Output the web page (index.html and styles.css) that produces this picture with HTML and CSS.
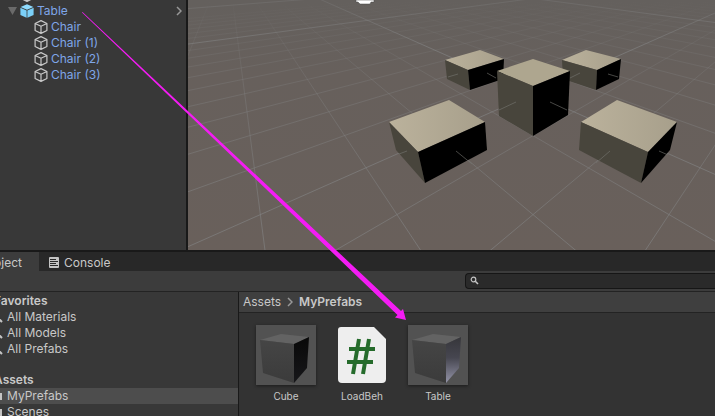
FILE: index.html
```html
<!DOCTYPE html>
<html lang="en">
<head>
<meta charset="utf-8">
<title>Editor</title>
<link rel="stylesheet" href="styles.css">
</head>
<body>
<svg class="defs" aria-hidden="true">
  <symbol id="cube" viewBox="0 0 14 14"><path d="M7 .6 12.900 3.500V10.500L7 13.400 1.100 10.500V3.500ZM1.100 3.500 7 6.300 12.900 3.500M7 6.300V13.400" fill="none" stroke="#c8c8c8" stroke-width="1.200" stroke-linejoin="round"/></symbol>
  <symbol id="prefab" viewBox="0 0 14 14"><path d="M7 .3 13.400 3 7 5.800 .6 3Z" fill="#8fdcff"/><path d="M.4 3.800 6.600 6.500V13.800L.4 11Z" fill="#7bd0f8"/><path d="M13.600 3.800 7.400 6.500V13.800L13.600 11Z" fill="#7bd0f8"/></symbol>
  <symbol id="lens" viewBox="0 0 12 12"><circle cx="4.500" cy="4.500" r="2.300" fill="none" stroke="#c4c4c4" stroke-width="1.200"/><path d="M6.300 6.300 9 9" stroke="#c4c4c4" stroke-width="1.600"/></symbol>
  <symbol id="handle" viewBox="0 0 12 12"><circle cx="4" cy="4" r="3.500" fill="none" stroke="#c4c4c4" stroke-width="1.400"/><path d="M6.500 6.500 11 11" stroke="#c4c4c4" stroke-width="2"/></symbol>
  <symbol id="folder" viewBox="0 0 12 12"><path d="M0 2H5L7 3H11V10H0Z" fill="#c4c4c4"/></symbol>
  <symbol id="chevron" viewBox="0 0 6 10"><path d="M1 1 5 5 1 9" fill="none" stroke="#989898" stroke-width="1.500"/></symbol>
</svg>
<main class="editor">
  <section class="upper">
    <nav class="hierarchy" aria-label="Hierarchy">
      <ul class="tree">
        <li class="row root"><svg class="icon"><use href="#cube"/></svg></li>
        <li class="row root"><svg class="fold" viewBox="0 0 9 8"><path d="M0 0H9L4.500 8Z" fill="#6a6a6a"/></svg><svg class="icon"><use href="#prefab"/></svg><a href="#">Table</a><svg class="open"><use href="#chevron"/></svg></li>
        <li class="row child"><svg class="icon"><use href="#cube"/></svg><a href="#">Chair</a></li>
        <li class="row child"><svg class="icon"><use href="#cube"/></svg><a href="#">Chair (1)</a></li>
        <li class="row child"><svg class="icon"><use href="#cube"/></svg><a href="#">Chair (2)</a></li>
        <li class="row child"><svg class="icon"><use href="#cube"/></svg><a href="#">Chair (3)</a></li>
      </ul>
    </nav>
    <svg class="scene" viewBox="188 0 527 250" preserveAspectRatio="xMinYMin slice" role="img" aria-label="Scene view">
      <defs>
        <linearGradient id="ground" gradientUnits="userSpaceOnUse" x1="0" y1="0" x2="0" y2="250"><stop offset="0" stop-color="#64605d"/><stop offset=".3" stop-color="#67605c"/><stop offset="1" stop-color="#69605b"/></linearGradient>
        <linearGradient id="fade" gradientUnits="userSpaceOnUse" x1="0" y1="0" x2="0" y2="250"><stop offset="0" stop-color="#808080" stop-opacity="0"/><stop offset=".12" stop-color="#808080" stop-opacity=".15"/><stop offset=".4" stop-color="#808080" stop-opacity=".4"/><stop offset="1" stop-color="#808080" stop-opacity=".7"/></linearGradient>
        <linearGradient id="major" gradientUnits="userSpaceOnUse" x1="0" y1="0" x2="0" y2="250"><stop offset="0" stop-color="#808080" stop-opacity=".3"/><stop offset=".2" stop-color="#808080" stop-opacity=".7"/><stop offset="1" stop-color="#808080" stop-opacity=".7"/></linearGradient>
        <linearGradient id="lid" x1="0" y1="0" x2="1" y2="0"><stop offset="0" stop-color="#bbb29c"/><stop offset="1" stop-color="#a79f8b"/></linearGradient>
      </defs>
      <rect x="188" width="2000" height="1200" fill="url(#ground)"/>
      <g fill="none" stroke="url(#fade)">
        <path d="M839-42 787 358M839-42 574 358M839-42 362 358M839-42 150 358M839-42-275 358M839-42-488 358M839-42-700 358M839-42-912 358M839-42-1125 358M839-42-1337 358M839-42-1550 358M839-42-1762 358M839-42-1974 358M839-42-2399 358M839-42-2612 358M839-42-2824 358M839-42-3036 358M839-42-3249 358M839-42-3461 358"/>
        <path d="M227-42 67 358M227-42 279 358M227-42 492 358M227-42 704 358M227-42 916 358M227-42 1341 358M227-42 1554 358M227-42 1766 358M227-42 1978 358M227-42 2191 358M227-42 2403 358M227-42 2616 358M227-42 2828 358M227-42 3040 358M227-42 3465 358M227-42 3678 358M227-42 3890 358M227-42 4102 358M227-42 4315 358M227-42 4527 358"/>
      </g>
      <path d="M839-42-63 358M839-42-2187 358M839-42-4311 358M227-42 1129 358M227-42 3253 358M227-42 5377 358" fill="none" stroke="url(#major)"/>
      <path d="M356 0H374V2H371L370 4H360L358 2H356Z" fill="#fff" stroke="#444" stroke-width=".5"/>
      <g fill="url(#lid)">
        <path d="M445 60 480 50 504 59 468 70Z"/><path d="M562 60 586 50 621 59 597 70Z"/>
        <path d="M389 122 449 100 485 122 418 152Z"/><path d="M581 122 617 100 677 122 648 152Z"/>
      </g>
      <g fill="#48453c">
        <path d="M445 60 468 70 470 90 447 79Z"/><path d="M562 60 597 70 596 90 563 79Z"/>
        <path d="M389 122 418 152 425 183 396 150Z"/><path d="M581 122 648 152 641 183 579 150Z"/>
      </g>
      <g fill="#000">
        <path d="M468 70 504 59 503 79 470 90Z"/><path d="M597 70 621 59 619 79 596 90Z"/>
        <path d="M418 152 485 122 487 150 425 183Z"/><path d="M648 152 677 122 670 150 641 183Z"/>
      </g>
      <path d="M497 71 533 59 570 71 533 86Z" fill="#aea68f"/>
      <path d="M497 71 533 86V136L499 116Z" fill="#48453c"/>
      <path d="M533 86 570 71 568 115 533 136Z"/>
      <path d="M550 102 567 110M516 102 499 110M487 73 496 78M580 73 570 78M458 74 448 77M608 74 618 77M456 151 472 164M610 151 596 163M659 151 668 155M407 151 399 154" fill="none" stroke="#777672" stroke-opacity=".6"/>
    </svg>
  </section>
  <section class="lower">
    <div class="tabs" role="tablist">
      <button class="tab active" role="tab" aria-selected="true">Project</button>
      <button class="tab" role="tab" aria-selected="false"><svg class="log" viewBox="0 0 10 11"><rect width="10" height="11" rx="1" fill="#c4c4c4"/><path d="M1 2.500H7M1 4.500H9M1 6.500H7M1 8.500H9" stroke="#282828"/></svg>Console</button>
    </div>
    <div class="toolbar">
      <label class="search"><svg class="lens"><use href="#lens"/></svg><input type="search" aria-label="Search assets"></label>
    </div>
    <div class="project">
      <aside class="folders">
        <ul class="tree">
          <li class="row heading">Favorites</li>
          <li class="row item"><svg class="lens"><use href="#handle"/></svg>All Materials</li>
          <li class="row item"><svg class="lens"><use href="#handle"/></svg>All Models</li>
          <li class="row item"><svg class="lens"><use href="#handle"/></svg>All Prefabs</li>
        </ul>
        <ul class="tree">
          <li class="row heading">Assets</li>
          <li class="row item selected"><svg class="lens"><use href="#folder"/></svg>MyPrefabs</li>
          <li class="row item"><svg class="lens"><use href="#folder"/></svg>Scenes</li>
        </ul>
      </aside>
      <div class="content">
        <div class="crumbs"><a href="#">Assets</a><svg class="sep"><use href="#chevron"/></svg><strong>MyPrefabs</strong></div>
        <div class="assets">
          <figure class="asset">
            <svg class="thumb" viewBox="0 0 60 60"><defs><linearGradient id="front" x1="0" y1="0" x2="0" y2="1"><stop stop-color="#454545"/><stop offset="1" stop-color="#3b3b3b"/></linearGradient><linearGradient id="dark" x1="0" y1="0" x2="0" y2="1"><stop stop-color="#080808"/><stop offset="1" stop-color="#17171a"/></linearGradient></defs><rect width="60" height="60" fill="#525252"/><path d="M4 15 25 9 53 12 38 19Z" fill="#636363"/><path d="M4 15 38 19V58L7 48Z" fill="url(#front)"/><path d="M38 19 53 12 51 43 38 58Z" fill="url(#dark)"/></svg>
            <figcaption>Cube</figcaption>
          </figure>
          <figure class="asset">
            <svg class="thumb plain" viewBox="0 0 60 60"><path d="M9 2H42L54 14V54Q54 58 50 58H10Q6 58 6 54V5Q6 2 9 2Z" fill="#eee"/><path d="M27 14 21 49M37 14 31 49M17 24H43M15 37H41" fill="none" stroke="#256b2b" stroke-width="4"/></svg>
            <figcaption>LoadBeh</figcaption>
          </figure>
          <figure class="asset">
            <svg class="thumb" viewBox="0 0 60 60"><defs><linearGradient id="lit" x1="0" y1="0" x2="0" y2="1"><stop stop-color="#36363a"/><stop offset=".45" stop-color="#464650"/><stop offset="1" stop-color="#9494a8"/></linearGradient></defs><rect width="60" height="60" fill="#525252"/><path d="M4 15 25 9 53 12 38 19Z" fill="#636363"/><path d="M4 15 38 19V58L7 48Z" fill="url(#front)"/><path d="M38 19 53 12 51 43 38 58Z" fill="url(#lit)"/></svg>
            <figcaption>Table</figcaption>
          </figure>
        </div>
      </div>
    </div>
  </section>
  <svg class="arrow" viewBox="0 0 420 330" aria-hidden="true"><path d="M82 12.500 82.500 12 401 311 403 309 406 320 395 317.500 397.500 315Z" fill="#f41cf4"/></svg>
</main>
</body>
</html>
```
FILE: styles.css
```css
* { box-sizing: border-box; }

body {
  margin: 0;
  background: #191919;
  color: #c8c8c8;
  font: 12px/16px Inter, "Liberation Sans", sans-serif;
}

.defs { display: none; }
svg { display: block; flex: none; }
a { color: inherit; text-decoration: none; }
ul { margin: 0; padding: 0; list-style: none; }

.editor {
  position: relative;
  display: flex;
  flex-direction: column;
  gap: 2px;
  height: 100vh;
  overflow: hidden;
}

.upper {
  display: grid;
  grid-template-columns: 186px 1fr;
  gap: 2px;
  flex: 1;
  min-height: 0;
}

.hierarchy { background: #383838; overflow: hidden; }
.hierarchy .tree { margin-top: -13px; }
.row { display: flex; align-items: center; height: 16px; white-space: nowrap; }
.hierarchy .row { gap: 3px; color: #7fa6e8; }
.root { padding: 0 4px 0 20px; }
.root:has(.fold) { padding-left: 8px; }
.child { padding-left: 34px; }
.icon { width: 14px; height: 14px; }
.fold { width: 9px; height: 8px; }
.open { width: 6px; height: 10px; margin-left: auto; }
.scene { width: 100%; height: 100%; min-height: 0; }

.lower {
  display: flex;
  flex-direction: column;
  flex: 0 0 164px;
  min-height: 0;
}

.tabs { display: flex; flex: none; height: 19px; background: #282828; }
.tab {
  display: flex;
  align-items: center;
  gap: 5px;
  padding: 2px 10px 0;
  border: 0;
  background: none;
  color: inherit;
  font: inherit;
}
.tab.active {
  justify-content: flex-end;
  width: 39px;
  padding: 2px 17px 0 0;
  background: #3c3c3c;
  overflow: hidden;
}
.log { width: 10px; height: 11px; }

.toolbar {
  display: flex;
  flex: none;
  justify-content: flex-end;
  height: 21px;
  padding: 2px 0;
  border-bottom: 1px solid #232323;
  background: #3c3c3c;
}
.search {
  display: flex;
  align-items: center;
  width: 35%;
  padding-left: 3px;
  border: 1px solid #161616;
  border-right: 0;
  border-radius: 4px 0 0 4px;
  background: #2a2a2a;
}
.search input {
  flex: 1;
  min-width: 0;
  height: 12px;
  padding: 0;
  border: 0;
  outline: 0;
  background: none;
  color: inherit;
  font: inherit;
}
.lens { width: 12px; height: 12px; }

.project {
  display: grid;
  grid-template-columns: 238px 1fr;
  gap: 1px;
  flex: 1;
  min-height: 0;
}
.folders {
  display: flex;
  flex-direction: column;
  gap: 15px;
  padding-top: 1px;
  background: #383838;
  overflow: hidden;
}
.folders .tree { margin-left: -8px; }
.heading { padding-left: 2px; font-weight: 600; }
.item { gap: 4px; }
.item .lens { margin-left: -1px; }
.selected { background: #4d4d4d; }

.content { display: flex; flex-direction: column; background: #333; min-width: 0; }
.crumbs {
  display: flex;
  align-items: center;
  gap: 6px;
  height: 21px;
  padding-left: 4px;
  border-bottom: 1px solid #232323;
  background: #3f3f3f;
}
.crumbs strong { font-weight: 600; }
.sep { width: 6px; height: 10px; }

.assets { display: flex; gap: 16px; padding: 12px 17px; }
.asset {
  display: flex;
  flex-direction: column;
  align-items: center;
  gap: 3px;
  margin: 0;
  font-size: 10px;
}
.thumb { width: 60px; height: 60px; box-shadow: 0 1px 3px #1c1c1c; }
.thumb.plain { box-shadow: none; }

.arrow { position: absolute; top: 0; left: 0; width: 420px; height: 330px; }
```
